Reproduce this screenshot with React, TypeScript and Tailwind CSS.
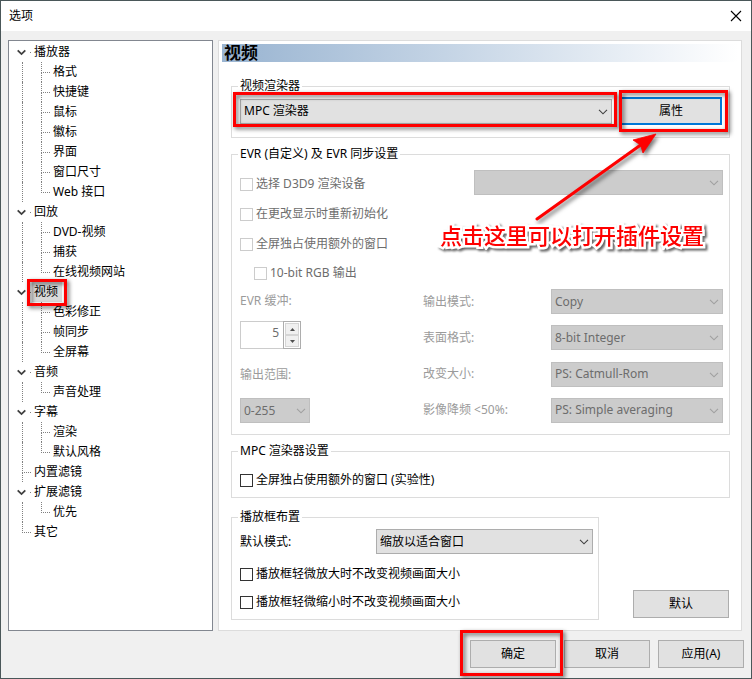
import { useState } from 'react';
import type { ReactNode } from 'react';

interface TreeNode {
  label: string;
  children?: string[];
}

const TREE: TreeNode[] = [
  { label: '播放器', children: ['格式', '快捷键', '鼠标', '徽标', '界面', '窗口尺寸', 'Web 接口'] },
  { label: '回放', children: ['DVD-视频', '捕获', '在线视频网站'] },
  { label: '视频', children: ['色彩修正', '帧同步', '全屏幕'] },
  { label: '音频', children: ['声音处理'] },
  { label: '字幕', children: ['渲染', '默认风格'] },
  { label: '内置滤镜' },
  { label: '扩展滤镜', children: ['优先'] },
  { label: '其它' },
];

const EVR_OPTIONS = [
  { id: 'output-mode', label: '输出模式:', value: 'Copy' },
  { id: 'surface', label: '表面格式:', value: '8-bit Integer' },
  { id: 'resizer', label: '改变大小:', value: 'PS: Catmull-Rom' },
  { id: 'downscale', label: '影像降频 <50%:', value: 'PS: Simple averaging' },
];

/* Red marker frame, laid over the control it points out */
function Marker({ className }: { className: string }) {
  return (
    <span
      className={`pointer-events-none absolute z-10 border-[3px] border-[#fe0000] drop-shadow-[2px_2px_2px_rgba(0,0,0,0.6)] ${className}`}
    />
  );
}

/* Dotted elbow in front of a tree item */
function Elbow({ last }: { last: boolean }) {
  return (
    <span className="block h-5 w-3 shrink-0">
      <span className="block h-[11px] w-[9px] border-b border-l border-dotted border-[#808080]" />
      {!last && <span className="block h-[9px] border-l border-dotted border-[#808080]" />}
    </span>
  );
}

function Tree() {
  const [selected, setSelected] = useState('视频');

  return (
    <nav className="w-[205px] shrink-0 border border-[#828790] bg-white pt-px">
      <ul>
        {TREE.map((node, i) => (
          <li key={node.label}>
            <div className="flex h-5 items-center">
              {node.children ? (
                <span className="flex w-[25px] shrink-0 items-center pl-2">
                  <svg width="9" height="7" viewBox="0 0 9 7" fill="none" stroke="#404040" strokeWidth="1.8">
                    <path d="M0.7 1.3 4.5 5.1 8.3 1.3" />
                  </svg>
                  <span className="ml-1 h-px w-px bg-[#808080]" />
                </span>
              ) : (
                <span className="pl-[13px]">
                  <Elbow last={i === TREE.length - 1} />
                </span>
              )}
              <button
                type="button"
                onClick={() => setSelected(node.label)}
                className={`relative -ml-0.5 h-5 pr-1 pl-0.5 ${selected === node.label ? 'bg-[#d9d9d9]' : ''}`}
              >
                {node.label}
                {node.label === '视频' && <Marker className="-top-[3px] -right-[5px] -bottom-1 -left-[5px]" />}
              </button>
            </div>
            {node.children && (
              <ul>
                {node.children.map((child, j) => (
                  <li key={child} className="flex h-5 items-center pl-[13px]">
                    <span className="h-5 w-[19px] shrink-0 border-l border-dotted border-[#808080]" />
                    <Elbow last={j === node.children!.length - 1} />
                    <button type="button" onClick={() => setSelected(child)}>
                      {child}
                    </button>
                  </li>
                ))}
              </ul>
            )}
          </li>
        ))}
      </ul>
    </nav>
  );
}

function Group({ title, className, children }: { title: string; className?: string; children: ReactNode }) {
  return (
    <fieldset className={`min-w-0 border border-[#dcdcdc] ${className ?? ''}`}>
      <legend className="ml-1.5 px-0.5 leading-[18px]">{title}</legend>
      {children}
    </fieldset>
  );
}

interface SelectProps {
  id: string;
  value: string;
  label?: string;
  disabled?: boolean;
  className?: string;
}

function Select({ id, value, label, disabled, className }: SelectProps) {
  return (
    <div className={`relative h-[25px] ${className ?? ''}`}>
      <select
        id={id}
        aria-label={label}
        disabled={disabled}
        className="h-full w-full appearance-none border border-[#adadad] bg-[#e1e1e1] pr-5 pl-[3px] text-black disabled:border-[#bfbfbf] disabled:bg-[#cccccc] disabled:text-[#6d6d6d] disabled:opacity-100"
      >
        <option>{value}</option>
      </select>
      <svg
        className="pointer-events-none absolute top-[10px] right-1"
        width="10"
        height="6"
        viewBox="0 0 10 6"
        fill="none"
        stroke={disabled ? '#a0a0a0' : '#404040'}
        strokeWidth="1.1"
      >
        <path d="M1 0.8 5 4.8 9 0.8" />
      </svg>
    </div>
  );
}

function Check({ label, disabled, className }: { label: string; disabled?: boolean; className: string }) {
  return (
    <label className={`flex items-center gap-[3px] ${disabled ? 'text-[#6d6d6d]' : ''} ${className}`}>
      <input
        type="checkbox"
        disabled={disabled}
        className="h-[13px] w-[13px] shrink-0 appearance-none border border-[#333333] bg-white checked:bg-[#333333] disabled:border-[#cccccc]"
      />
      {label}
    </label>
  );
}

function PushButton({ className, children }: { className: string; children: ReactNode }) {
  return (
    <button type="button" className={`h-7 shrink-0 bg-[#e1e1e1] hover:bg-[#e5f1fb] ${className}`}>
      {children}
    </button>
  );
}

function BufferSpinner() {
  const [buffers, setBuffers] = useState('5');

  return (
    <div className="mt-2 flex h-7 w-[61px] border border-[#cccccc] bg-white">
      <input
        id="evr-buffers"
        disabled
        value={buffers}
        onChange={(e) => setBuffers(e.target.value)}
        className="mb-1 w-0 flex-1 pr-1 text-right text-[#6d6d6d]"
      />
      <div className="-my-px -mr-px flex w-[18px] flex-col border border-[#adadad] bg-white p-px">
        <button type="button" disabled aria-label="增加" className="flex flex-1 items-center justify-center border border-[#d5d5d5] bg-[#f0f0f0]">
          <svg width="5" height="3" viewBox="0 0 5 3" fill="#505050">
            <path d="M0 3 2.5 0 5 3z" />
          </svg>
        </button>
        <button type="button" disabled aria-label="减少" className="flex flex-1 items-center justify-center border border-[#d5d5d5] bg-[#f0f0f0]">
          <svg width="5" height="3" viewBox="0 0 5 3" fill="#505050">
            <path d="M0 0 2.5 3 5 0z" />
          </svg>
        </button>
      </div>
    </div>
  );
}

/* Arrow and caption that point at the properties button */
function Callout() {
  return (
    <>
      <svg
        className="pointer-events-none absolute top-[89px] right-[76px] z-20 drop-shadow-[2px_3px_2px_rgba(0,0,0,0.55)]"
        width="135"
        height="95"
        viewBox="0 0 135 95"
      >
        <path d="M7 89 112 14" stroke="#fe0000" strokeWidth="3" strokeLinecap="round" />
        <path d="M126 4 103 10 110.500 15 113 23z" fill="#fe0000" stroke="#fe0000" strokeWidth="0.8" />
      </svg>
      <p className="pointer-events-none absolute top-[180px] right-[37px] z-20 text-[22px] leading-7 font-medium whitespace-nowrap text-[#fe0000] drop-shadow-[2px_2px_1px_rgba(0,0,0,0.6)] [paint-order:stroke_fill] [-webkit-text-stroke:5px_white]">
        点击这里可以打开插件设置
      </p>
    </>
  );
}

function VideoPage() {
  return (
    <main className="relative mr-0.5 min-w-0 flex-1 border border-[#dcdcdc] bg-white pb-2.5">
      <h1 className="mx-[3px] mt-[3px] h-[18px] bg-linear-to-r from-[#99b4d1] to-white pl-0.5 text-[17px] leading-[18px] font-bold">
        视频
      </h1>

      <div className="mt-[15px] mr-[11px] ml-3 flex flex-col gap-[7px]">
        <Group title="视频渲染器">
          <div className="flex items-center gap-2 pt-0.5 pr-[7px] pb-3 pl-2">
            <div className="relative flex-1">
              <Select id="renderer" label="视频渲染器" value="MPC 渲染器" />
              <Marker className="-top-[7px] -right-[5px] -bottom-[3px] -left-[7px]" />
            </div>
            <div className="relative">
              <PushButton className="block w-[102px] border-2 border-[#0078d7]">属性</PushButton>
              <Marker className="-top-[7px] -right-1.5 -bottom-[7px] -left-px" />
            </div>
          </div>
        </Group>

        <Group title="EVR (自定义) 及 EVR 同步设置">
          <div className="pt-1.5 pr-1.5 pb-[11px] pl-2">
            <div className="flex justify-between">
              <Check label="选择 D3D9 渲染设备" disabled className="h-[30px]" />
              <Select id="d3d9-device" label="D3D9 渲染设备" value="" disabled className="mt-px w-[249px]" />
            </div>
            <Check label="在更改显示时重新初始化" disabled className="h-[30px]" />
            <Check label="全屏独占使用额外的窗口" disabled className="h-[30px]" />
            <Check label="10-bit RGB 输出" disabled className="mb-0.5 ml-3.5 h-7" />

            <div className="flex justify-between text-[#9b9b9b]">
              <div>
                <label htmlFor="evr-buffers" className="block h-6 leading-6">
                  EVR 缓冲:
                </label>
                <BufferSpinner />
                <label htmlFor="output-range" className="mt-3.5 block h-6 leading-6">
                  输出范围:
                </label>
                <Select id="output-range" value="0-255" disabled className="mt-[11px] w-[70px]" />
              </div>
              <div className="flex flex-col justify-between">
                {EVR_OPTIONS.map((option) => (
                  <div key={option.id} className="flex items-center">
                    <label htmlFor={option.id} className="w-32">
                      {option.label}
                    </label>
                    <Select id={option.id} value={option.value} disabled className="w-[172px]" />
                  </div>
                ))}
              </div>
            </div>
          </div>
        </Group>

        <Group title="MPC 渲染器设置">
          <div className="pt-[7px] pb-1 pl-2">
            <Check label="全屏独占使用额外的窗口 (实验性)" className="h-[26px]" />
          </div>
        </Group>

        <div className="mt-[3px] flex items-end gap-[34px] pr-px">
          <Group title="播放框布置" className="flex-1">
            <div className="pt-[3px] pr-[5px] pb-[3px] pl-2">
              <div className="mb-1.5 flex items-center justify-between">
                <label htmlFor="default-mode">默认模式:</label>
                <Select id="default-mode" value="缩放以适合窗口" className="w-[217px]" />
              </div>
              <Check label="播放框轻微放大时不改变视频画面大小" className="h-7" />
              <Check label="播放框轻微缩小时不改变视频画面大小" className="h-7" />
            </div>
          </Group>
          <PushButton className="mb-0.5 w-24 border border-[#adadad]">默认</PushButton>
        </div>
      </div>

      <Callout />
    </main>
  );
}

export default function App() {
  return (
    <div className="flex min-h-screen flex-col border border-[#4a5759] bg-[#f0f0f0] font-['Noto_Sans','Noto_Sans_CJK_SC',sans-serif] text-[12px] leading-[18px] text-black">
      <header className="flex h-[30px] items-center justify-between bg-white pr-[9px] pl-2">
        <span>选项</span>
        <button type="button" aria-label="关闭">
          <svg width="12" height="12" viewBox="0 0 12 12" fill="none" stroke="#000000" strokeWidth="1.1">
            <path d="M1 1 11 11M11 1 1 11" />
          </svg>
        </button>
      </header>

      <div className="flex flex-1 gap-[5px] px-[7px] pt-[9px]">
        <Tree />
        <VideoPage />
      </div>

      <footer className="flex justify-end gap-2 px-[7px] pt-[9px] pb-2.5">
        <div className="relative">
          <PushButton className="block w-[86px] border border-[#adadad]">确定</PushButton>
          <Marker className="-top-2.5 -right-[7px] -bottom-2 -left-2.5" />
        </div>
        <PushButton className="w-[86px] border border-[#adadad]">取消</PushButton>
        <PushButton className="w-[86px] border border-[#adadad]">应用(A)</PushButton>
      </footer>
    </div>
  );
}
